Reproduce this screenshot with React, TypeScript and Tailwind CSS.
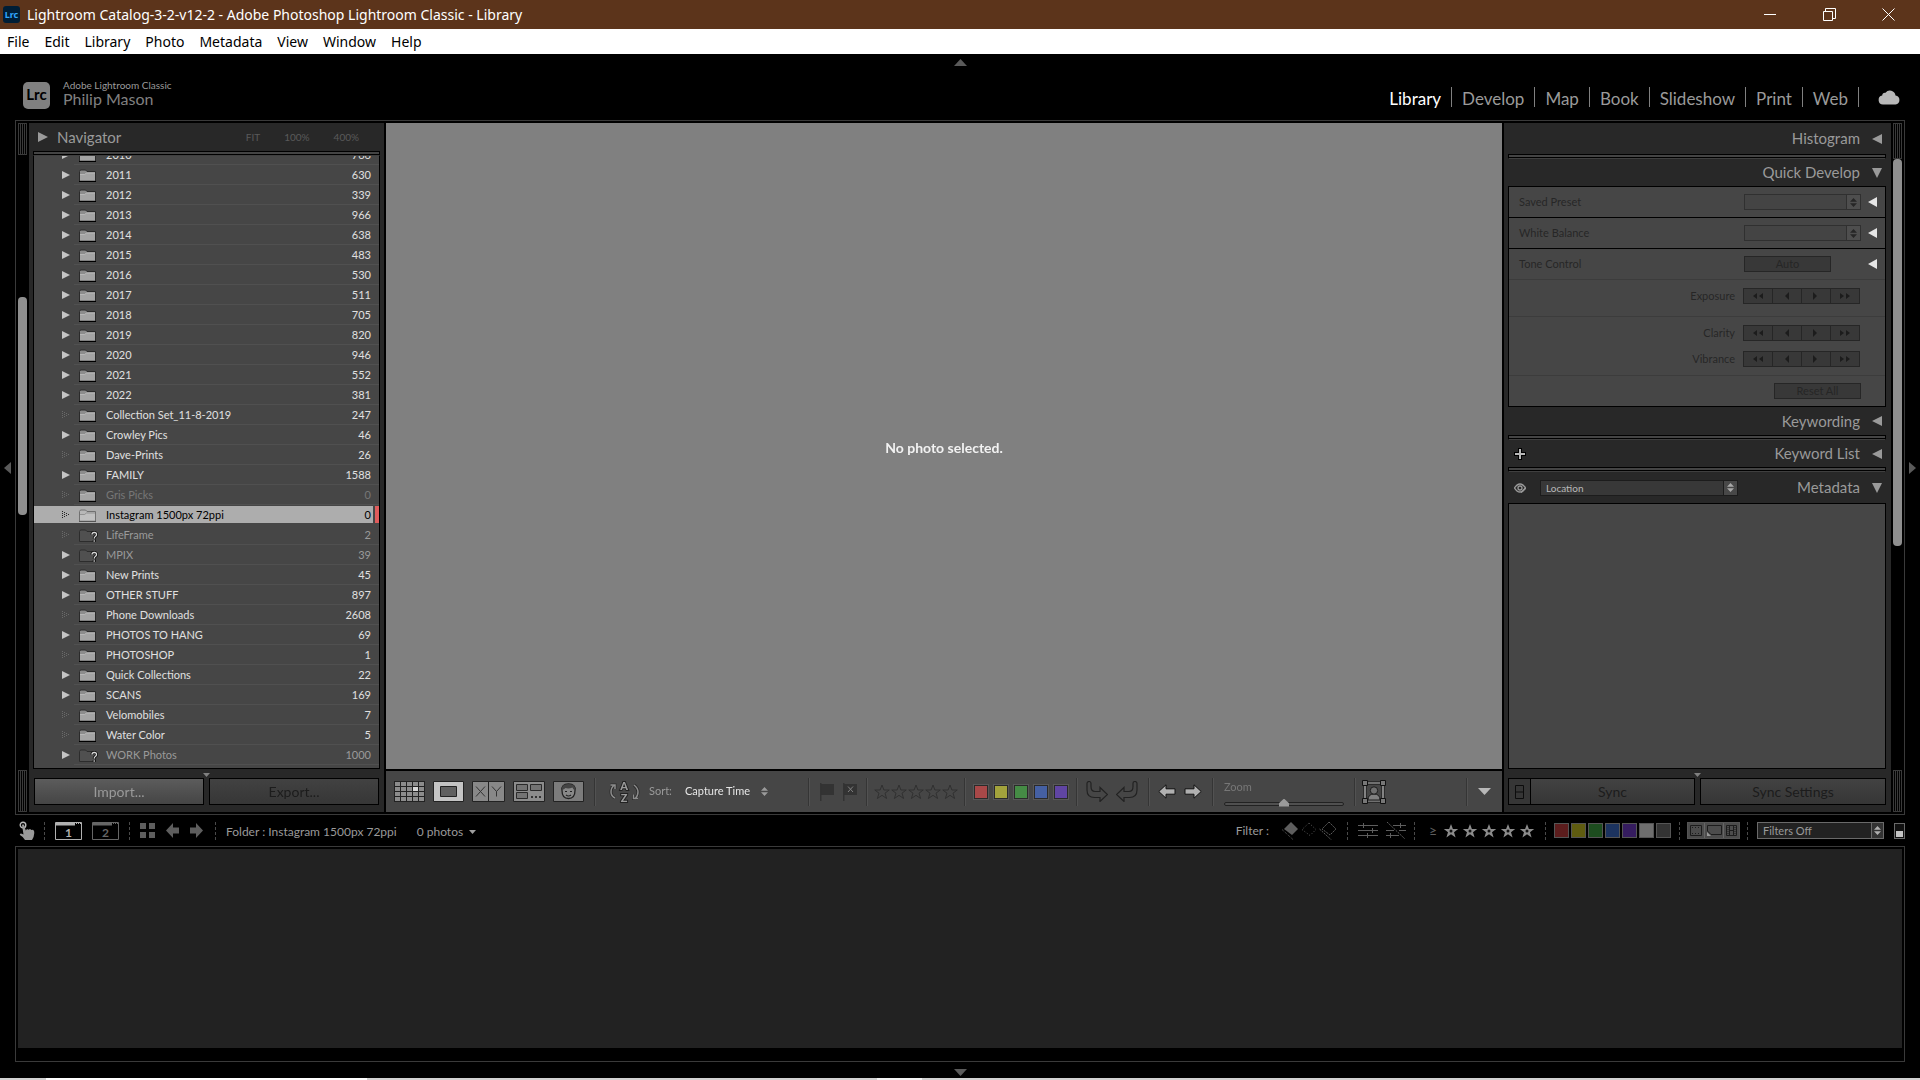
import { useLayoutEffect, useRef } from 'react';
import type { ReactNode } from 'react';

type Folder = {
  name: string;
  count: string;
  leaf?: boolean;
  state?: 'empty' | 'missing' | 'selected';
};

const folders: Folder[] = [
  { name: '2010', count: '766' },
  { name: '2011', count: '630' },
  { name: '2012', count: '339' },
  { name: '2013', count: '966' },
  { name: '2014', count: '638' },
  { name: '2015', count: '483' },
  { name: '2016', count: '530' },
  { name: '2017', count: '511' },
  { name: '2018', count: '705' },
  { name: '2019', count: '820' },
  { name: '2020', count: '946' },
  { name: '2021', count: '552' },
  { name: '2022', count: '381' },
  { name: 'Collection Set_11-8-2019', count: '247', leaf: true },
  { name: 'Crowley Pics', count: '46' },
  { name: 'Dave-Prints', count: '26', leaf: true },
  { name: 'FAMILY', count: '1588' },
  { name: 'Gris Picks', count: '0', leaf: true, state: 'empty' },
  { name: 'Instagram 1500px 72ppi', count: '0', leaf: true, state: 'selected' },
  { name: 'LifeFrame', count: '2', leaf: true, state: 'missing' },
  { name: 'MPIX', count: '39', state: 'missing' },
  { name: 'New Prints', count: '45' },
  { name: 'OTHER STUFF', count: '897' },
  { name: 'Phone Downloads', count: '2608', leaf: true },
  { name: 'PHOTOS TO HANG', count: '69' },
  { name: 'PHOTOSHOP', count: '1', leaf: true },
  { name: 'Quick Collections', count: '22' },
  { name: 'SCANS', count: '169' },
  { name: 'Velomobiles', count: '7', leaf: true },
  { name: 'Water Color', count: '5', leaf: true },
  { name: 'WORK Photos', count: '1000', state: 'missing' },
  { name: '', count: '' },
];

const menus = ['File', 'Edit', 'Library', 'Photo', 'Metadata', 'View', 'Window', 'Help'];
const modules = ['Library', 'Develop', 'Map', 'Book', 'Slideshow', 'Print', 'Web'];
const labelColors = ['bg-[#a84848]', 'bg-[#a3a33c]', 'bg-[#458b45]', 'bg-[#4560a3]', 'bg-[#6045a3]'];
const filterColors = [
  'bg-[#5c1d1d]',
  'bg-[#5f5c10]',
  'bg-[#1d4d1f]',
  'bg-[#1c335f]',
  'bg-[#351c5f]',
  'bg-[#6e6e6e]',
  'bg-[#333333]',
];

const STAR = 'M8 1 9.900 6H15.200L11 9.200 12.600 14.500 8 11.300 3.400 14.500 5 9.200.8 6H6.100Z';

export default function App() {
  return (
    <div className="flex h-screen min-h-[700px] flex-col overflow-hidden bg-black font-[Lato,sans-serif] text-[11px] text-[#9a9a9a]">
      <TitleBar />
      <MenuBar />
      <Header />

      <div className="flex min-h-0 flex-1">
        <Gutter d="M7 0v12L0 6Z" label="Hide left panel" />
        <main className="flex min-w-0 flex-1 gap-0.5 border border-[#3a3a3a] p-0.5">
          <ScrollStrip top="h-8" thumb="mt-[142px] h-[218px]" />
          <LeftPanel />
          <section className="flex min-w-0 flex-1 flex-col">
            <div className="flex flex-1 items-center justify-center bg-[#808080] pt-0.5 text-[14px] font-bold text-[#f2f2f2]">
              No photo selected.
            </div>
            <Toolbar />
          </section>
          <RightPanel />
          <ScrollStrip top="h-9" thumb="h-[387px]" />
        </main>
        <Gutter d="M0 0v12L7 6Z" label="Hide right panel" />
      </div>

      <FilterBar />

      <div className="mx-[15px] h-[216px] shrink-0 border border-[#3a3a3a] px-0.5 pt-0.5">
        <div className="h-[199px] bg-[#222222]" />
      </div>
      <button aria-label="Hide filmstrip" className="flex h-4 shrink-0 items-center justify-center">
        <svg width="13" height="7" className="mt-1 fill-[#5a5a5a]">
          <path d="M0 0h13L6.500 7Z" />
        </svg>
      </button>
      <div className="flex h-0.5 shrink-0 gap-[510px] bg-[#d2d2d2] pl-[46px]">
        <div className="w-[321px] bg-white" />
        <div className="w-[45px] bg-[#f4f4f4]" />
      </div>
    </div>
  );
}

function TitleBar() {
  return (
    <div className="flex h-[29px] shrink-0 items-center bg-[#5c341b] font-['Noto_Sans',sans-serif] text-[14px] text-white">
      <svg width="17" height="17" className="ml-[3px]">
        <rect width="17" height="17" rx="3" fill="#001e36" />
        <text x="8.500" y="12" textAnchor="middle" fontSize="9" fontWeight="700" fill="#31a8ff">
          Lrc
        </text>
      </svg>
      <h1 className="ml-[7px] flex-1">
        Lightroom Catalog-3-2-v12-2 - Adobe Photoshop Lightroom Classic - Library
      </h1>
      <div className="flex gap-[46px] pr-[25px]">
        <button aria-label="Minimize">
          <svg width="13" height="13" stroke="#fff">
            <path d="M0 6.500h12" />
          </svg>
        </button>
        <button aria-label="Restore">
          <svg width="13" height="13" stroke="#fff" fill="none">
            <path d="M.5 3.500h9v9h-9ZM2.500 3.500v-3h10v10h-3" />
          </svg>
        </button>
        <button aria-label="Close">
          <svg width="13" height="13" stroke="#fff">
            <path d="M.5.5l12 12M12.500.5l-12 12" />
          </svg>
        </button>
      </div>
    </div>
  );
}

function MenuBar() {
  return (
    <nav className="flex h-[25px] shrink-0 items-center gap-[15px] bg-white pl-[7px] font-['Noto_Sans',sans-serif] text-[14px] text-black">
      {menus.map((m) => (
        <button key={m}>{m}</button>
      ))}
    </nav>
  );
}

function Header() {
  return (
    <header className="flex h-[66px] shrink-0 flex-col">
      <button aria-label="Hide module picker" className="flex h-4 items-center justify-center">
        <svg width="13" height="7" className="fill-[#5a5a5a]">
          <path d="M0 7h13L6.500 0Z" />
        </svg>
      </button>
      <div className="flex flex-1 items-center pr-5 pl-[23px]">
        <svg width="27" height="27">
          <rect width="27" height="27" rx="5" fill="#808080" />
          <text x="13.500" y="18" textAnchor="middle" fontSize="15" fontWeight="700" fill="#000">
            Lrc
          </text>
        </svg>
        <div className="ml-[13px] flex-1 pb-1">
          <div className="text-[10px] leading-3">Adobe Lightroom Classic</div>
          <div className="text-[16px] leading-4 text-[#808080]">Philip Mason</div>
        </div>
        <nav className="flex items-center pt-1 text-[17px]">
          {modules.map((m) => (
            <a
              key={m}
              href={`#${m}`}
              className={`mr-[10px] flex h-5 items-center border-r border-[#808080] pt-1 pr-[10px] leading-4 ${
                m === 'Library' ? 'text-white' : ''
              }`}
            >
              {m}
            </a>
          ))}
        </nav>
        <button aria-label="Cloud sync" className="ml-[9px] pt-1">
          <svg width="22" height="16" className="fill-[#b8b8b8]">
            <path d="M5 15.500a4.500 4.500 0 0 1-.8-8.900 3 3 0 0 1 3.300-2.800 5.600 5.600 0 0 1 10 2.600 4.600 4.600 0 0 1 0 9.100Z" />
          </svg>
        </button>
      </div>
    </header>
  );
}

function Gutter({ d, label }: { d: string; label: string }) {
  return (
    <button aria-label={label} className="flex w-[15px] shrink-0 items-center justify-center">
      <svg width="7" height="12" className="fill-[#5a5a5a]">
        <path d={d} />
      </svg>
    </button>
  );
}

function ScrollStrip({ top, thumb }: { top: string; thumb: string }) {
  return (
    <div className="flex w-[9px] shrink-0 flex-col">
      <Grip className={top} />
      <div className="min-h-0 flex-1 overflow-hidden">
        <div className={`rounded-sm bg-[#8f8f8f] ${thumb}`} />
      </div>
      <Grip className="h-[42px]" />
    </div>
  );
}

function Grip({ className }: { className: string }) {
  return (
    <div
      className={`shrink-0 border-y border-[#3a3a3a] bg-[repeating-linear-gradient(90deg,#3a3a3a_0_1px,#000_1px_2px)] ${className}`}
    />
  );
}

function Groove() {
  return <div className="h-[5px] shrink-0 border border-black border-b-[#3f3f3f] bg-[#444] shadow-[inset_0_-1px_0_#000]" />;
}

function LeftPanel() {
  const list = useRef<HTMLUListElement>(null);

  useLayoutEffect(() => {
    if (list.current) list.current.scrollTop = 11;
  }, []);

  return (
    <aside className="flex w-[355px] shrink-0 flex-col bg-[#282828] px-1">
      <div className="flex h-7 shrink-0 items-center pl-[5px]">
        <button className="flex flex-1 items-center gap-[9px] text-[15px]">
          <svg width="10" height="10" className="fill-[#9a9a9a]">
            <path d="M0 0v10l10-5Z" />
          </svg>
          Navigator
        </button>
        <div className="flex gap-6 pr-[21px] text-[10px] text-[#5a5a5a]">
          <button>FIT</button>
          <button>100%</button>
          <button>400%</button>
        </div>
      </div>
      <Groove />
      <ul
        ref={list}
        className="min-h-0 flex-1 overflow-y-auto border border-t-0 border-black bg-[#464646] [scrollbar-width:none]"
      >
        {folders.map((f) => (
          <FolderRow key={f.name} folder={f} />
        ))}
      </ul>
      <div className="flex h-[43px] shrink-0 flex-col items-center">
        <Notch />
        <div className="flex w-full gap-[5px] px-px">
          <button className="h-[27px] flex-1 border border-black bg-linear-to-b from-[#5c5c5c] to-[#454545] text-[14px]">
            Import...
          </button>
          <button
            disabled
            className="h-[27px] flex-1 border border-black bg-linear-to-b from-[#424242] to-[#363636] text-[14px] text-[#1c1c1c]"
          >
            Export...
          </button>
        </div>
      </div>
    </aside>
  );
}

function Notch() {
  return (
    <svg width="7" height="9" className="shrink-0 fill-[#808080]">
      <path d="M0 4h7L3.500 8Z" />
    </svg>
  );
}

function FolderRow({ folder }: { folder: Folder }) {
  const { name, count, leaf, state } = folder;
  const selected = state === 'selected';
  const missing = state === 'missing';
  const color = selected
    ? 'text-black'
    : state === 'empty'
      ? 'text-[#777]'
      : missing
        ? 'text-[#9a9a9a]'
        : 'text-[#e0e0e0]';

  return (
    <li className={`flex h-5 gap-0.5 ${selected ? 'pt-px pb-0.5' : ''}`}>
      <button className={`flex flex-1 text-left ${color} ${selected ? 'bg-[#adadad]' : ''}`}>
        <span className="flex h-full w-10 items-center pl-7">
          {leaf ? <DottedArrow color={selected ? '#222' : '#6a6a6a'} /> : <SolidArrow />}
        </span>
        <span
          className={`flex h-full flex-1 items-center pt-0.5 pl-[5px] ${
            selected ? 'pr-0.5' : 'border-b border-[#505050] pr-2'
          }`}
        >
          <FolderIcon missing={missing} selected={selected} />
          <span className="ml-2 flex-1">{name}</span>
          <span>{count}</span>
        </span>
      </button>
      {selected && <span className="w-1 bg-[#e05c5c]" />}
    </li>
  );
}

function SolidArrow() {
  return (
    <svg width="8" height="8" className="fill-[#c4c4c4]">
      <path d="M0 0v8l8-4Z" />
    </svg>
  );
}

function DottedArrow({ color }: { color: string }) {
  return (
    <svg width="8" height="8" fill={color}>
      <path d="M0 0h1v1H0zM0 2h1v1H0zM0 4h1v1H0zM0 6h1v1H0zM2 1h1v1H2zM2 3h1v1H2zM2 5h1v1H2zM4 2h1v1H4zM4 4h1v1H4zM6 3h1v1H6z" />
    </svg>
  );
}

function FolderIcon({ missing, selected }: { missing: boolean; selected: boolean }) {
  if (missing) {
    return (
      <svg width="19" height="14" fill="none">
        <path d="M.5 12.500V2.500l1-1.500h5l1.500 1.500h8.500v10Z" fill="#505050" stroke="#2c2c2c" />
        <path d="M13 5.500q0-2 2.300-2t2.200 2q0 1.300-1.200 2t-1 2M15.200 11v2" stroke="#111" strokeWidth="3" />
        <path d="M13 5.500q0-2 2.300-2t2.200 2q0 1.300-1.200 2t-1 2M15.200 11.300v1.500" stroke="#d8d8d8" strokeWidth="1.300" />
      </svg>
    );
  }
  return (
    <svg width="19" height="14" fill="none">
      <path
        d="M.5 12V2.500L1.500 1h5L8 2.500h8.500V12Z"
        fill={selected ? '#b8b8b8' : '#8c8c8c'}
        stroke={selected ? '#707070' : '#2a2a2a'}
      />
      <path d="M1 5.500h4.500L7.500 4H16v7.500H1Z" fill={selected ? '#c0c0c0' : '#a4a4a4'} />
      <path d="M0 12.500h17" stroke={selected ? '#555' : '#000'} />
      <path d="M1 5.500h4.500L7.500 4H16" stroke={selected ? '#808080' : '#c4c4c4'} strokeWidth=".7" />
    </svg>
  );
}

function UpDown({ className }: { className: string }) {
  return (
    <svg width="7" height="9" className={className}>
      <path d="M0 3.800h7L3.500 0ZM0 5.200h7L3.500 9Z" />
    </svg>
  );
}

function PanelHeader({ title, open, height, children }: { title: string; open?: boolean; height: string; children?: ReactNode }) {
  return (
    <div className={`flex shrink-0 items-center pr-1 ${height}`}>
      {children}
      <button className="ml-auto flex items-center gap-3 text-[15px]">
        {title}
        <svg width="10" height="10" className="fill-[#9a9a9a]">
          <path d={open ? 'M0 0h10L5 10Z' : 'M10 0v10L0 5Z'} />
        </svg>
      </button>
    </div>
  );
}

function RightPanel() {
  return (
    <aside className="flex w-[387px] shrink-0 flex-col bg-[#282828] pr-[5px] pl-1">
      <PanelHeader title="Histogram" height="h-[31px]" />
      <Groove />
      <PanelHeader title="Quick Develop" open height="h-[27px]" />
      <div className="flex flex-col border border-black bg-[#464646] text-[#262626]">
        <PresetRow label="Saved Preset" />
        <PresetRow label="White Balance" />
        <div className="flex h-[31px] items-center border-b border-[#3c3c3c] pr-[7px] pl-[10px]">
          <span className="flex-1">Tone Control</span>
          <button disabled className="mr-[37px] h-4 w-[87px] border border-[#262626] bg-[#383838] leading-3">
            Auto
          </button>
          <WhiteArrow />
        </div>
        <div className="flex h-[37px] flex-col justify-center border-b border-[#3c3c3c] pb-1">
          <Stepper label="Exposure" />
        </div>
        <div className="flex h-[59px] flex-col justify-center gap-[9px] border-b border-[#3c3c3c]">
          <Stepper label="Clarity" />
          <Stepper label="Vibrance" />
        </div>
        <div className="flex h-[30px] items-center justify-end pr-6">
          <button disabled className="h-4 w-[87px] border border-[#262626] bg-[#383838] leading-3">
            Reset All
          </button>
        </div>
      </div>
      <PanelHeader title="Keywording" height="h-7" />
      <Groove />
      <PanelHeader title="Keyword List" height="h-[27px]">
        <button aria-label="Add keyword" className="ml-1.5">
          <svg width="12" height="12" fill="none">
            <path d="M6 0v12M0 6h12" stroke="#000" strokeWidth="4" />
            <path d="M6 1v10M1 6h10" stroke="#b8b8b8" strokeWidth="2" />
          </svg>
        </button>
      </PanelHeader>
      <Groove />
      <PanelHeader title="Metadata" open height="h-[31px]">
        <button aria-label="Toggle metadata fields" className="ml-1.5">
          <svg width="12" height="10" fill="none" stroke="#9a9a9a">
            <path d="M.5 5Q3 1 6 1t5.500 4Q9 9 6 9T.5 5Z" strokeWidth="1.300" />
            <circle cx="6" cy="5" r="2" strokeWidth="1.300" />
            <path d="M7 9.500 11.500 5" strokeWidth="1.500" />
          </svg>
        </button>
        <div className="relative ml-3.5">
          <select
            aria-label="Metadata set"
            className="block h-4 w-[198px] appearance-none border border-[#1c1c1c] bg-[#383838] pl-[5px] text-[10px] leading-3 text-[#b8b8b8]"
          >
            <option>Location</option>
          </select>
          <span className="pointer-events-none absolute inset-y-0 right-0 flex w-[15px] items-center justify-center border border-[#1c1c1c] bg-[#484848]">
            <UpDown className="fill-[#a8a8a8]" />
          </span>
        </div>
      </PanelHeader>
      <div className="min-h-0 flex-1 border border-black bg-[#464646]" />
      <div className="flex h-[43px] shrink-0 flex-col items-center">
        <Notch />
        <div className="flex w-full text-[14px] text-[#1c1c1c]">
          <button
            disabled
            aria-label="Auto sync"
            className="flex h-[27px] w-[22px] items-center justify-center border border-r-0 border-black bg-[#363636]"
          >
            <svg width="9" height="14" fill="none" stroke="#0c0c0c">
              <path d="M.5.500h8v13h-8ZM.5 7h8" />
            </svg>
          </button>
          <button
            disabled
            className="mr-[5px] h-[27px] w-[165px] border border-black bg-linear-to-b from-[#424242] to-[#363636]"
          >
            Sync
          </button>
          <button disabled className="h-[27px] flex-1 border border-black bg-linear-to-b from-[#424242] to-[#363636]">
            Sync Settings
          </button>
        </div>
      </div>
    </aside>
  );
}

function PresetRow({ label }: { label: string }) {
  const id = label.toLowerCase().replace(' ', '-');
  return (
    <div className="flex h-[31px] items-center border-b border-black pr-[7px] pl-[10px]">
      <label htmlFor={id} className="flex-1">
        {label}
      </label>
      <div className="relative mr-[7px]">
        <select
          id={id}
          disabled
          className="block h-4 w-[117px] appearance-none border border-[#303030] bg-[#444] opacity-100"
        />
        <span className="pointer-events-none absolute inset-y-0 right-0 flex w-[15px] items-center justify-center border border-[#303030] bg-[#4e4e4e]">
          <UpDown className="fill-[#262626]" />
        </span>
      </div>
      <WhiteArrow />
    </div>
  );
}

function WhiteArrow() {
  return (
    <button aria-label="Show more options">
      <svg width="10" height="10" className="fill-[#e6e6e6]">
        <path d="M9 0v10L0 5Z" />
      </svg>
    </button>
  );
}

function Stepper({ label }: { label: string }) {
  const steps = [
    { name: 'much less', d: 'M4 0v6L0 3ZM10 0v6L6 3Z' },
    { name: 'less', d: 'M7 -1v8L3 3Z' },
    { name: 'more', d: 'M2 -1v8L6 3Z' },
    { name: 'much more', d: 'M0 0v6l4-3ZM6 0v6l4-3Z' },
  ];
  return (
    <div className="flex items-center justify-end pr-[25px]">
      <span className="mr-2">{label}</span>
      <div className="flex h-4 w-[117px] divide-x divide-[#262626] border border-[#262626] bg-[#383838]">
        {steps.map((s) => (
          <button
            key={s.name}
            disabled
            aria-label={`${label} ${s.name}`}
            className="flex flex-1 items-center justify-center"
          >
            <svg width="10" height="6" className="overflow-visible fill-[#1c1c1c]">
              <path d={s.d} />
            </svg>
          </button>
        ))}
      </div>
    </div>
  );
}

function Rule() {
  return <div className="h-7 w-0.5 shrink-0 border-l border-[#353535] bg-[#525252]" />;
}

function Toolbar() {
  return (
    <div className="flex h-[43px] shrink-0 items-center overflow-hidden border-t-2 border-black bg-[#464646] pl-2">
      <div className="flex gap-2">
        <button aria-label="Grid view">
          <svg width="31" height="21">
            <path d="M0 0h31v21H0Z" fill="#222" />
            <path
              d="M1 1h5v4H1zM7 1h5v4H7zM13 1h5v4h-5zM19 1h5v4h-5zM25 1h5v4h-5zM1 6h5v4H1zM7 6h5v4H7zM13 6h5v4h-5zM25 6h5v4h-5zM1 11h5v4H1zM7 11h5v4H7zM13 11h5v4h-5zM19 11h5v4h-5zM25 11h5v4h-5zM1 16h5v4H1zM7 16h5v4H7zM13 16h5v4h-5zM19 16h5v4h-5zM25 16h5v4h-5z"
              fill="#8c8c8c"
            />
            <path d="M19 6h5v4h-5z" fill="#d8d8d8" />
          </svg>
        </button>
        <button aria-label="Loupe view">
          <svg width="31" height="21">
            <path d="M.5.5h30v20H.5Z" fill="#c4c4c4" stroke="#222" />
            <path d="M7.500 5.500h16v10h-16Z" fill="#606060" stroke="#222" />
          </svg>
        </button>
        <button aria-label="Compare view">
          <svg width="33" height="21" fill="none" stroke="#333">
            <path d="M.5.5h32v20H.5ZM16.500 0v21" fill="#888" stroke="#222" />
            <path d="M4 5.500l9 10M13 5.500l-9 10M20 5.500l4.500 5 4.500-5M24.500 10.500v5" />
          </svg>
        </button>
        <button aria-label="Survey view">
          <svg width="32" height="21">
            <path d="M.5.5h31v20H.5Z" fill="#8c8c8c" stroke="#222" />
            <path d="M3.500 3.500h11v6h-11ZM17.500 3.500h11v6h-11ZM3.500 11.500h11v6h-11Z" fill="#737373" stroke="#2a2a2a" />
            <path d="M18 15h2v2h-2zM22 15h2v2h-2zM26 15h2v2h-2z" fill="#333" />
          </svg>
        </button>
        <button aria-label="People view">
          <svg width="31" height="21" fill="none">
            <path d="M.5.5h30v20H.5Z" fill="#7c7c7c" stroke="#222" />
            <path d="M9 9.500Q8 3 15.500 3T22 9.500q0 8-6.500 8T9 9.500Z" fill="#888" stroke="#222" strokeWidth="1.300" />
            <path d="M9 9Q8 3 15.500 3T22 9Q20 8.500 19.500 6.500q-4 1.500-7 .5Q11 8.500 9 9Z" fill="#444" />
            <path d="M12 10.500h2M17 10.500h2M13 14q2.500 2 5 0" stroke="#222" strokeWidth="1.200" />
          </svg>
        </button>
      </div>
      <div className="ml-2.5">
        <Rule />
      </div>
      <button aria-label="Sort direction" className="ml-3">
        <svg width="32" height="26" fill="none">
          <path d="M7 19Q3 17 3 13t3-7M2.500 6H7v4" stroke="#2a2a2a" strokeWidth="3" />
          <path d="M7 19Q3 17 3 13t3-7M2.500 6H7v4" stroke="#8c8c8c" strokeWidth="1.500" />
          <path d="M26 6q4 3 4 7t-3 7M30 19.500h-4.500v-4" stroke="#2a2a2a" strokeWidth="3" />
          <path d="M26 6q4 3 4 7t-3 7M30 19.500h-4.500v-4" stroke="#8c8c8c" strokeWidth="1.500" />
          <g fill="#9a9a9a" stroke="#222" strokeWidth="2" paintOrder="stroke" fontSize="11" fontWeight="900" textAnchor="middle">
            <text x="16" y="11">A</text>
            <text x="16" y="23">Z</text>
          </g>
        </svg>
      </button>
      <label htmlFor="sort" className="w-[45px] pl-[9px]">
        Sort:
      </label>
      <div className="relative flex items-center">
        <select id="sort" className="w-[83px] appearance-none bg-transparent text-[11px] text-[#e6e6e6]">
          <option>Capture Time</option>
        </select>
        <UpDown className="pointer-events-none absolute right-0 fill-[#9a9a9a]" />
      </div>
      <div className="ml-10">
        <Rule />
      </div>
      <div className="flex w-14 items-center gap-[9px] pl-[10px]">
        <button aria-label="Flag as pick">
          <svg width="14" height="18" className="fill-[#333]">
            <path d="M0 0h1.500v18H0ZM1.500 1H14v11H1.500Z" />
          </svg>
        </button>
        <button aria-label="Flag as rejected">
          <svg width="14" height="18" className="fill-[#333]">
            <path d="M0 0h1.500v18H0ZM1.500 1H14v11H1.500Z" />
            <path d="M5 3.500l5 5.500M10 3.500 5 9" stroke="#808080" />
          </svg>
        </button>
      </div>
      <Rule />
      <div className="flex w-24 gap-px pl-[6px]">
        {[1, 2, 3, 4, 5].map((n) => (
          <button key={n} aria-label={`Rate ${n}`}>
            <svg width="16" height="16" fill="none" stroke="#303030">
              <path d={STAR} />
            </svg>
          </button>
        ))}
      </div>
      <Rule />
      <div className="flex w-[110px] gap-1.5 pl-2">
        {labelColors.map((c) => (
          <button key={c} aria-label="Colour label" className={`size-3.5 border border-[#2a2a2a] outline-1 outline-[#585858] ${c}`} />
        ))}
      </div>
      <Rule />
      <div className="flex w-[70px] gap-2 pl-2">
        <button aria-label="Rotate left">
          <svg width="22" height="21" fill="none" stroke="#222" strokeWidth="1.200">
            <path d="M1 2.500a2 2 0 0 1 4 0v3Q5 10.500 9 10.500h5V6.500l7.500 7-7.500 7v-4H8.500Q1 16.500 1 9Z" />
          </svg>
        </button>
        <button aria-label="Rotate right">
          <svg width="22" height="21" fill="none" stroke="#222" strokeWidth="1.200">
            <path d="M21 2.500a2 2 0 0 0-4 0v3Q17 10.500 13 10.500H8V6.500l-7.500 7 7.500 7v-4h5.500Q21 16.500 21 9Z" />
          </svg>
        </button>
      </div>
      <Rule />
      <div className="flex w-[62px] gap-2 pl-2">
        <button aria-label="Previous photo">
          <svg width="18" height="15">
            <path d="M.8 7.500 8 .8v4h9v5.400H8v4Z" fill="#b0b0b0" stroke="#111" />
          </svg>
        </button>
        <button aria-label="Next photo">
          <svg width="18" height="15">
            <path d="M17.200 7.500 10 .8v4H1v5.400h9v4Z" fill="#b0b0b0" stroke="#111" />
          </svg>
        </button>
      </div>
      <Rule />
      <div className="mr-2.5 ml-2.5 w-[120px] pt-1">
        <label htmlFor="zoom" className="block leading-4 text-[#777]">
          Zoom
        </label>
        <input
          id="zoom"
          type="range"
          defaultValue="50"
          className="mt-1 block h-2.5 w-full appearance-none bg-transparent [&::-webkit-slider-runnable-track]:h-1 [&::-webkit-slider-runnable-track]:rounded-sm [&::-webkit-slider-runnable-track]:border [&::-webkit-slider-runnable-track]:border-[#222] [&::-webkit-slider-runnable-track]:bg-[#505050] [&::-webkit-slider-thumb]:-mt-1 [&::-webkit-slider-thumb]:h-2 [&::-webkit-slider-thumb]:w-2.5 [&::-webkit-slider-thumb]:appearance-none [&::-webkit-slider-thumb]:bg-[#9a9a9a] [&::-webkit-slider-thumb]:[clip-path:polygon(50%_0,100%_60%,100%_100%,0_100%,0_60%)]"
        />
      </div>
      <Rule />
      <button aria-label="Draw face region" className="ml-1.5">
        <svg width="24" height="24" fill="none">
          <path d="M3 3h18v18H3Z" stroke="#111" strokeWidth="3" />
          <path d="M3 3h18v18H3Z" stroke="#d0d0d0" strokeWidth="1.200" />
          <path d="M6 20q0-6 6-6t6 6Z" fill="#808080" stroke="#1c1c1c" />
          <circle cx="12" cy="10.500" r="3.700" fill="#707070" stroke="#1c1c1c" />
          <path d="M.5.5h5v5h-5ZM18.500.5h5v5h-5ZM.5 18.500h5v5h-5ZM18.500 18.500h5v5h-5Z" fill="#777" stroke="#111" />
        </svg>
      </button>
      <div className="ml-auto flex items-center gap-2.5 pr-[11px]">
        <Rule />
        <button aria-label="Toolbar contents">
          <svg width="13" height="7" className="fill-[#b8b8b8]">
            <path d="M0 0h13L6.500 7Z" />
          </svg>
        </button>
      </div>
    </div>
  );
}

function Dots() {
  return <div className="h-[18px] shrink-0 border-l border-dashed border-[#4a4a4a]" />;
}

function WindowIcon({ n, className }: { n: number; className: string }) {
  return (
    <button aria-label={`Window ${n}`} className={className}>
      <svg width="27" height="18" fill="none" stroke="currentColor">
        <path d="M.5.5h26v17H.5Z" />
        <path d="M1 2h19" strokeWidth="3" />
        <path d="M21 1.500h1M23 1.500h1M25 1.500h1" />
        <text x="13.500" y="14.500" fill="currentColor" stroke="none" fontSize="12" fontWeight="700" textAnchor="middle">
          {n}
        </text>
      </svg>
    </button>
  );
}

function FilterBar() {
  return (
    <div className="flex h-[31px] shrink-0 items-center overflow-hidden px-[15px]">
      <button aria-label="Photo painter" className="ml-1">
        <svg width="16" height="19">
          <circle cx="4" cy="4" r="2.800" fill="none" stroke="#b8b8b8" strokeWidth="1.400" />
          <path
            d="M3 4q1-1.500 2 0l1.800 5.500L8 8l1.500.8L11 8l1.500 1L14 8.800q1.500.8 1.300 3.200-.2 4-2.300 7H6q-1.500-3-5-5-.8-1.500 1-1.500l2.500 1Z"
            fill="#9a9a9a"
          />
        </svg>
      </button>
      <div className="ml-[9px]">
        <Dots />
      </div>
      <WindowIcon n={1} className="ml-2.5 text-[#b0b0b0]" />
      <WindowIcon n={2} className="mr-2.5 ml-2.5 text-[#666]" />
      <Dots />
      <div className="mr-3 ml-2.5 flex items-center gap-[11px]">
        <button aria-label="Back to grid">
          <svg width="15" height="15" className="fill-[#5e5e5e]">
            <path d="M0 0h6v6H0zM9 0h6v6H9zM0 9h6v6H0zM9 9h6v6H9z" />
          </svg>
        </button>
        <button aria-label="Go back">
          <svg width="13" height="15" className="fill-[#5e5e5e]">
            <path d="M0 7.500 7 0v4.500h6v6H7V15Z" />
          </svg>
        </button>
        <button aria-label="Go forward">
          <svg width="13" height="15" className="fill-[#5e5e5e]">
            <path d="M13 7.500 6 0v4.500H0v6h6V15Z" />
          </svg>
        </button>
      </div>
      <Dots />
      <span className="ml-2.5 pt-0.5 text-[12px]">Folder : Instagram 1500px 72ppi</span>
      <button className="ml-5 flex items-center gap-1.5 pt-0.5 text-[12px]">
        0 photos
        <svg width="7" height="4" className="fill-[#a0a0a0]">
          <path d="M0 0h7L3.500 4Z" />
        </svg>
      </button>

      <div className="ml-auto flex items-center">
        <span className="mr-3 text-[12px]">Filter :</span>
        <div className="mr-2.5 flex items-center gap-0.5">
          <button aria-label="Filter flagged">
            <svg width="18" height="19">
              <path d="M10 1l7 7-6 6-8-6Z" fill="#5e5e5e" />
              <path d="M1 8.500 12.500 19" stroke="#5e5e5e" strokeDasharray="1 1" />
            </svg>
          </button>
          <button aria-label="Filter unflagged">
            <svg width="16" height="19" fill="none" stroke="#5e5e5e" strokeDasharray="1 2">
              <path d="M8 2l7 6.500-6 6-8-6Z" />
            </svg>
          </button>
          <button aria-label="Filter rejected">
            <svg width="18" height="19" fill="none" stroke="#5e5e5e">
              <path d="M10 1l7 7-6 6-8-6ZM.5 8 12.500 19" strokeDasharray="2 1" />
            </svg>
          </button>
        </div>
        <Dots />
        <div className="mx-2 flex items-center gap-2 pl-0.5">
          <button aria-label="Filter edited">
            <svg width="20" height="17" stroke="#5e5e5e">
              <path d="M0 3.500h20M0 8.500h20M0 13.500h20M5.500 1v5M14.500 6v5M9.500 11v5" />
            </svg>
          </button>
          <button aria-label="Filter unedited">
            <svg width="20" height="17" stroke="#5e5e5e">
              <path d="M7 3.500h13M0 8.500h8M13 8.500h7M0 13.500h13M14.500 1v5M4.500 11v5" />
              <path d="M1 0l18 17" strokeDasharray="2 1" />
            </svg>
          </button>
        </div>
        <Dots />
        <button aria-label="Rating is greater than or equal to" className="ml-3 w-3 text-[14px] text-[#5e5e5e]">
          ≥
        </button>
        <div className="mr-2.5 ml-1 flex gap-[3px]">
          {[1, 2, 3, 4, 5].map((n) => (
            <button key={n} aria-label={`Filter rating ${n}`}>
              <svg width="16" height="16">
                <path d={STAR} fill="#8c8c8c" />
                <circle cx="8" cy="8" r="1.500" fill="#111" />
              </svg>
            </button>
          ))}
        </div>
        <Dots />
        <div className="mx-2 flex gap-0.5">
          {filterColors.map((c) => (
            <button key={c} aria-label="Filter colour" className={`size-[15px] border border-[#555] ${c}`} />
          ))}
        </div>
        <Dots />
        <div className="mx-[7px] flex h-[17px] border border-[#555] bg-[#4c4c4c]">
          <button aria-label="Master photos" className="w-[17px] border-r border-[#666]">
            <svg width="16" height="15" fill="none" stroke="#1c1c1c">
              <path d="M2.500 2.500h11v10h-11Z" />
              <path d="M4 4.500h9M4 10.500h9" strokeDasharray="1 2" />
            </svg>
          </button>
          <button aria-label="Virtual copies" className="w-[19px] border-r border-[#666]">
            <svg width="18" height="15" fill="none" stroke="#1c1c1c">
              <path d="M2.500 8V2.500h14v9H6Z" />
              <path d="M2 9v4h4Z" fill="#999" stroke="none" />
            </svg>
          </button>
          <button aria-label="Videos" className="w-[15px]">
            <svg width="15" height="15" fill="none" stroke="#1c1c1c">
              <path d="M2.500 2.500h10v10h-10ZM5.500 3v10M9.500 3v10M5.500 7.500h4" />
              <path d="M4 4v9M11 4v9" strokeDasharray="1 1" />
            </svg>
          </button>
        </div>
        <Dots />
        <div className="relative mr-2.5 ml-[9px]">
          <select
            aria-label="Filters"
            className="block h-[17px] w-[127px] appearance-none border border-[#6a6a6a] bg-[#222] pl-[5px] text-[11px] leading-3"
          >
            <option>Filters Off</option>
          </select>
          <span className="pointer-events-none absolute inset-y-0 right-0 flex w-[13px] items-center justify-center border border-[#6a6a6a] bg-[#333]">
            <UpDown className="fill-[#b0b0b0]" />
          </span>
        </div>
        <button aria-label="Toggle filters" className="flex h-4 w-[11px] flex-col justify-end border border-[#6a6a6a] bg-[#111] p-px">
          <span className="h-1.5 w-full bg-[#c4c4c4]" />
        </button>
      </div>
    </div>
  );
}
